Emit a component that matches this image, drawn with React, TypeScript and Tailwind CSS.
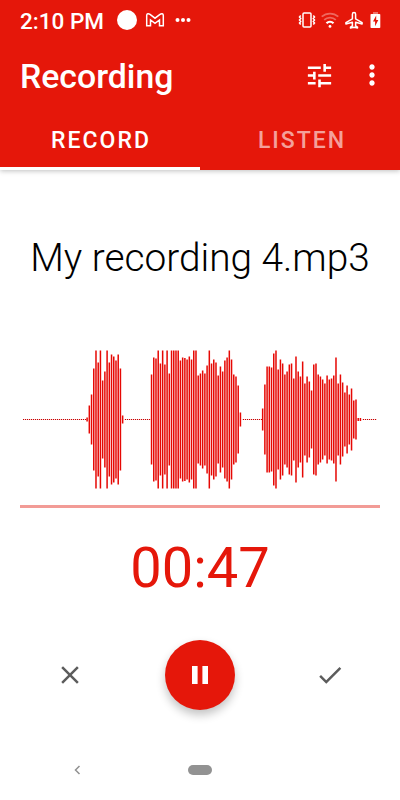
import { MdClose, MdDone, MdMoreVert, MdTune } from "react-icons/md";

const PITCH = 20 / 9;

// half height of each bar, start is the first column of the burst
const BURSTS = [
  {
    start: 29,
    bars: [2, 14, 25, 51, 69, 57, 69, 39, 48, 69, 57, 65, 63, 59, 65, 51, 4],
  },
  {
    start: 58,
    bars: [
      45, 62, 61, 69, 56, 69, 55, 69, 46, 69, 69, 69, 69, 59, 62, 61.5, 60, 63, 60, 69, 69, 44, 46,
      49, 46, 54, 69, 56, 60, 57, 44, 53, 48, 59, 62, 69, 60, 45, 43, 34, 7,
    ],
  },
  {
    start: 108,
    bars: [
      11, 35, 53, 53, 52, 66, 69, 50, 60, 56, 45, 48, 55, 56, 41, 63, 48, 43, 58, 36, 43, 38, 29,
      55, 56, 45, 43, 40, 36, 44, 40, 41, 44, 62, 36, 45, 37, 27, 34, 25, 31, 19, 20, 1.5, 1.5,
    ],
  },
];

function Waveform() {
  return (
    <svg className="block w-[360px] h-[140px]" viewBox="0 0 360 140">
      <path d="M3 69.5H357" stroke="#c80000" strokeWidth="1" strokeDasharray="1.2 0.8" />
      {BURSTS.map((burst) => (
        <g key={burst.start} fill="#e60804">
          <rect x={2 + burst.start * PITCH} y="68" width={burst.bars.length * PITCH} height="3" fill="#fff" />
          {burst.bars.map((h, i) => (
            <rect key={i} x={1.9 + (burst.start + i) * PITCH} y={69.5 - h} width="1.5" height={h * 2} />
          ))}
        </g>
      ))}
    </svg>
  );
}

function StatusBar() {
  return (
    <div className="flex h-10 items-center justify-between pl-5 pr-[19px]">
      <div className="flex items-center">
        <span className="pt-px text-[22.500px] leading-10 font-medium">2:10 PM</span>
        <span className="ml-[13px] size-5 rounded-full bg-white" />
        <svg className="ml-2 h-4 w-5" viewBox="0 0 20 16" fill="none" stroke="white" strokeWidth="1.500">
          <path d="M1.700 3.500v10.300h3.800V8L10 11.300 14.500 8v5.800h3.800V3.500C18.300 1.500 16.500 1.300 15 2.400L10 6.200 5 2.400C3.500 1.300 1.700 1.500 1.700 3.500Z" />
        </svg>
        <svg className="ml-[10px] h-4 w-4" viewBox="0 0 16 16" fill="white">
          <circle cx="2.500" cy="8" r="2" />
          <circle cx="8" cy="8" r="2" />
          <circle cx="13.500" cy="8" r="2" />
        </svg>
      </div>
      <div className="flex items-center">
        <svg className="h-5 w-[18px]" viewBox="0 0 18 20" fill="none" stroke="white" strokeWidth="1.500">
          <rect x="5" y="2.900" width="8" height="14.200" rx="1" />
          <path d="M2.700 5.500l-1.200 1.500 1.200 1.500-1.200 1.500 1.200 1.500-1.200 1.500 1.200 1.500M15.300 5.500l1.200 1.500-1.200 1.500 1.200 1.500-1.200 1.500 1.200 1.500-1.200 1.500" />
        </svg>
        <svg className="ml-[5px] h-5 w-[18px]" viewBox="0 0 18 20" fill="none" stroke="white" strokeWidth="1.800">
          <path d="M.7 6.700a12.500 12.500 0 0 1 16.600 0M3.200 9.900a8.500 8.500 0 0 1 11.600 0" opacity=".35" />
          <path d="M5.500 13.200a5 5 0 0 1 7 0" strokeWidth="2.200" />
          <circle cx="9" cy="16.400" r="1.400" fill="white" stroke="none" />
        </svg>
        <svg className="ml-[6px] h-5 w-[18px]" viewBox="0 0 18 20" fill="none" stroke="white" strokeWidth="1.500" strokeLinejoin="round">
          <path d="M7.400 4.200a1.600 1.600 0 0 1 3.200 0v4.600l6.500 3.800v1.300l-6.500-1.700v3.600l1.900 1.300v.9L9 17.300 5.500 18v-.9l1.900-1.300v-3.600L.9 13.900v-1.300l6.500-3.800Z" />
        </svg>
        <svg className="ml-[7px] h-5 w-[11px]" viewBox="0 0 11 20">
          <rect x="3" y="2" width="5" height="2" fill="white" opacity=".4" />
          <rect x=".5" y="4" width="9.800" height="14" rx=".8" fill="white" />
          <path d="M6.200 5.500 3 11.500h2.100v4.800L8.300 10H6.200Z" fill="#e5170a" />
        </svg>
      </div>
    </div>
  );
}

export default function App() {
  return (
    <div className="flex h-[800px] w-[400px] flex-col bg-white font-['Roboto',sans-serif]">
      <header className="h-[170px] bg-[#e5170a] text-white shadow-[0_1px_5px_rgba(0,0,0,0.25)]">
        <StatusBar />
        <div className="flex h-[70px] items-center justify-between pl-5 pr-3">
          <h1 className="pt-[5px] text-[33.800px] font-medium">Recording</h1>
          <div className="flex items-center gap-[21px]">
            <MdTune className="size-[31px]" />
            <MdMoreVert className="size-8" />
          </div>
        </div>
        <div className="flex h-[60px] text-[23px] font-medium tracking-[2px]">
          <button className="w-1/2 border-b-3 border-white pt-[6px] pl-[2px]">RECORD</button>
          <button className="w-1/2 border-b-3 border-transparent pt-[6px] pl-1 text-white/60">LISTEN</button>
        </div>
      </header>

      <main className="flex flex-col items-center px-5 pt-[63px]">
        <h2 className="text-[38.800px] leading-[50px] font-light whitespace-nowrap text-black">My recording 4.mp3</h2>
        <div className="mt-[67px] border-b-3 border-[#f29b96] pb-[15px]">
          <Waveform />
        </div>
        <div className="mt-[28px] text-[56px] leading-[64px] text-[#e5170a]">00:47</div>

        {/* Controls */}
        <div className="mt-[40px] flex w-full items-center justify-between px-[35px]">
          <button className="text-[#5c5c5c]">
            <MdClose className="size-[30px]" />
          </button>
          <button className="flex size-[70px] items-center justify-center rounded-full bg-[#e5170a] shadow-[0_5px_10px_rgba(0,0,0,0.24)]">
            <svg className="h-[18px] w-4" viewBox="0 0 16 18" fill="white">
              <rect width="5.600" height="18" />
              <rect x="10.400" width="5.600" height="18" />
            </svg>
          </button>
          <button className="text-[#5c5c5c]">
            <MdDone className="size-[30px]" />
          </button>
        </div>
      </main>

      {/* System navigation */}
      <nav className="mt-auto flex h-[60px] items-center justify-center">
        <div className="flex w-[252px] items-center">
          <svg className="h-3 w-[114px]" viewBox="0 0 114 12" fill="none" stroke="#909090" strokeWidth="1.500">
            <path d="M5.500 2 1.500 6l4 4" />
          </svg>
          <span className="h-[10px] w-6 rounded-full bg-[#929292]" />
        </div>
      </nav>
    </div>
  );
}
